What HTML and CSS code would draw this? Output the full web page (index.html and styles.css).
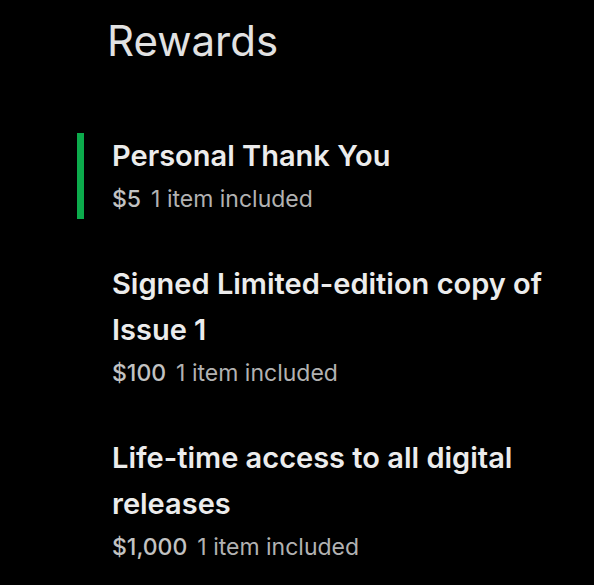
FILE: index.html
```html
<!DOCTYPE html>
<html>
<head>
<meta charset="utf-8">
<link rel="stylesheet" href="styles.css">
</head>
<body>
<main class="panel">
  <h1 class="heading">Rewards</h1>
  <ul class="rewards">
    <li class="reward reward--selected">
      <div class="reward-body">
        <div class="reward-title">Personal Thank You</div>
        <div class="reward-meta"><span class="price">$5</span><span class="count">1 item included</span></div>
      </div>
    </li>
    <li class="reward">
      <div class="reward-body">
        <div class="reward-title">Signed Limited-edition copy of Issue 1</div>
        <div class="reward-meta"><span class="price">$100</span><span class="count">1 item included</span></div>
      </div>
    </li>
    <li class="reward">
      <div class="reward-body">
        <div class="reward-title">Life-time access to all digital releases</div>
        <div class="reward-meta"><span class="price">$1,000</span><span class="count">1 item included</span></div>
      </div>
    </li>
  </ul>
</main>
</body>
</html>
```
FILE: styles.css
```css
html, body {
  margin: 0;
  padding: 0;
  background: #000;
}
body {
  width: 594px;
  height: 585px;
  overflow: hidden;
  font-family: Inter, "Noto Sans", sans-serif;
  color: #ececec;
}
.panel {
  padding: 16px 0 0 77px;
}
.heading {
  margin: 0 0 0 30px;
  font-size: 42px;
  line-height: 50px;
  font-weight: 400;
  color: #e2e2e2;
}
.rewards {
  list-style: none;
  margin: 67px 0 0 0;
  padding: 0;
  display: flex;
  flex-direction: column;
  gap: 42px;
}
.reward {
  display: flex;
  gap: 28px;
}
.reward::before {
  content: "";
  width: 7px;
  flex: none;
  background: transparent;
}
.reward--selected::before {
  background: #0cab4c;
}
.reward-body {
  width: 445px;
}
.reward-title {
  font-size: 29px;
  line-height: 46px;
  font-weight: 600;
  color: #ececec;
}
.reward-meta {
  font-size: 23px;
  line-height: 40px;
  color: #b2b2b2;
  display: flex;
  gap: 10px;
}
.price {
  font-weight: 500;
  color: #c2c2c2;
}
```
